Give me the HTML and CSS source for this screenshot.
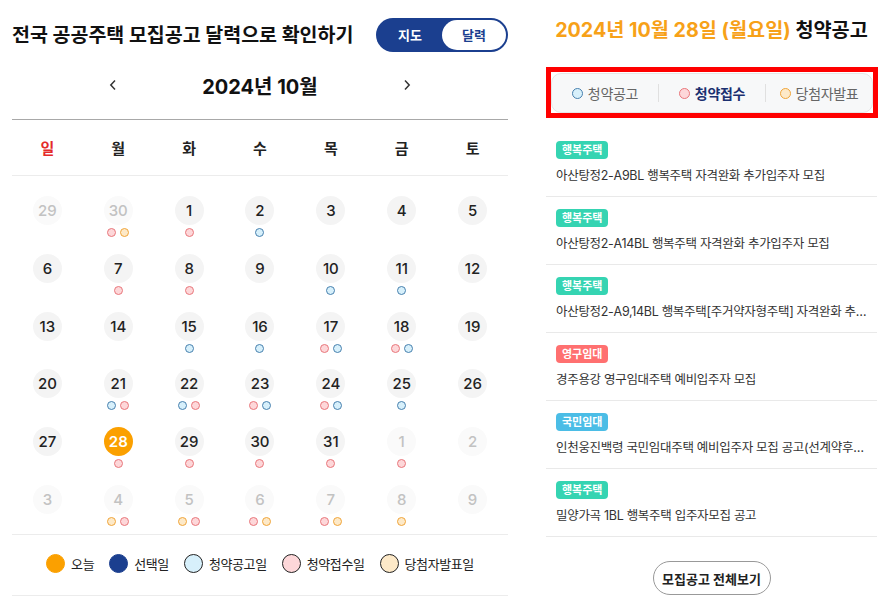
FILE: index.html
```html
<!DOCTYPE html>
<html lang="ko">
<head>
    <meta charset="UTF-8">
    <meta name="viewport" content="width=device-width, initial-scale=1.0">
    <title>공공주택 모집공고 달력</title>
    <link rel="stylesheet" href="styles.css">
</head>
<body>

    <div class="page">
        <!-- 왼쪽: 달력 -->
        <div class="calendar-col">
            <div class="cal-header">
                <h1>전국 공공주택 모집공고 달력으로 확인하기</h1>
                <div class="toggle">
                    <span class="toggle-btn">지도</span>
                    <span class="toggle-btn active">달력</span>
                </div>
            </div>

            <div class="month-nav">
                <svg class="arrow" width="8" height="12" viewBox="0 0 8 12"><path d="M6 1.5 1.8 6 6 10.5" fill="none" stroke="#333" stroke-width="1.5"/></svg>
                <div class="month-title">2024년 10월</div>
                <svg class="arrow" width="8" height="12" viewBox="0 0 8 12"><path d="M2 1.5 6.2 6 2 10.5" fill="none" stroke="#333" stroke-width="1.5"/></svg>
            </div>

            <div class="weekdays">
                <span class="sun">일</span><span>월</span><span>화</span><span>수</span><span>목</span><span>금</span><span>토</span>
            </div>

            <div class="days">
                <div class="day out"><span class="num">29</span><div class="dots"></div></div>
                <div class="day out"><span class="num">30</span><div class="dots"><i class="dot pink"></i><i class="dot yellow"></i></div></div>
                <div class="day"><span class="num">1</span><div class="dots"><i class="dot pink"></i></div></div>
                <div class="day"><span class="num">2</span><div class="dots"><i class="dot blue"></i></div></div>
                <div class="day"><span class="num">3</span><div class="dots"></div></div>
                <div class="day"><span class="num">4</span><div class="dots"></div></div>
                <div class="day"><span class="num">5</span><div class="dots"></div></div>

                <div class="day"><span class="num">6</span><div class="dots"></div></div>
                <div class="day"><span class="num">7</span><div class="dots"><i class="dot pink"></i></div></div>
                <div class="day"><span class="num">8</span><div class="dots"><i class="dot pink"></i></div></div>
                <div class="day"><span class="num">9</span><div class="dots"></div></div>
                <div class="day"><span class="num">10</span><div class="dots"><i class="dot blue"></i></div></div>
                <div class="day"><span class="num">11</span><div class="dots"><i class="dot blue"></i></div></div>
                <div class="day"><span class="num">12</span><div class="dots"></div></div>

                <div class="day"><span class="num">13</span><div class="dots"></div></div>
                <div class="day"><span class="num">14</span><div class="dots"></div></div>
                <div class="day"><span class="num">15</span><div class="dots"><i class="dot blue"></i></div></div>
                <div class="day"><span class="num">16</span><div class="dots"><i class="dot blue"></i></div></div>
                <div class="day"><span class="num">17</span><div class="dots"><i class="dot pink"></i><i class="dot blue"></i></div></div>
                <div class="day"><span class="num">18</span><div class="dots"><i class="dot pink"></i><i class="dot blue"></i></div></div>
                <div class="day"><span class="num">19</span><div class="dots"></div></div>

                <div class="day"><span class="num">20</span><div class="dots"></div></div>
                <div class="day"><span class="num">21</span><div class="dots"><i class="dot blue"></i><i class="dot pink"></i></div></div>
                <div class="day"><span class="num">22</span><div class="dots"><i class="dot blue"></i><i class="dot pink"></i></div></div>
                <div class="day"><span class="num">23</span><div class="dots"><i class="dot pink"></i><i class="dot blue"></i></div></div>
                <div class="day"><span class="num">24</span><div class="dots"><i class="dot pink"></i><i class="dot blue"></i></div></div>
                <div class="day"><span class="num">25</span><div class="dots"><i class="dot blue"></i></div></div>
                <div class="day"><span class="num">26</span><div class="dots"></div></div>

                <div class="day"><span class="num">27</span><div class="dots"></div></div>
                <div class="day today"><span class="num">28</span><div class="dots"><i class="dot pink"></i></div></div>
                <div class="day"><span class="num">29</span><div class="dots"><i class="dot pink"></i></div></div>
                <div class="day"><span class="num">30</span><div class="dots"><i class="dot pink"></i></div></div>
                <div class="day"><span class="num">31</span><div class="dots"><i class="dot pink"></i></div></div>
                <div class="day out"><span class="num">1</span><div class="dots"><i class="dot pink"></i></div></div>
                <div class="day out"><span class="num">2</span><div class="dots"></div></div>

                <div class="day out"><span class="num">3</span><div class="dots"></div></div>
                <div class="day out"><span class="num">4</span><div class="dots"><i class="dot yellow"></i><i class="dot pink"></i></div></div>
                <div class="day out"><span class="num">5</span><div class="dots"><i class="dot yellow"></i><i class="dot pink"></i></div></div>
                <div class="day out"><span class="num">6</span><div class="dots"><i class="dot pink"></i><i class="dot yellow"></i></div></div>
                <div class="day out"><span class="num">7</span><div class="dots"><i class="dot pink"></i><i class="dot yellow"></i></div></div>
                <div class="day out"><span class="num">8</span><div class="dots"><i class="dot yellow"></i></div></div>
                <div class="day out"><span class="num">9</span><div class="dots"></div></div>
            </div>

            <div class="legend">
                <span class="legend-item"><i class="mark today-mark"></i>오늘</span>
                <span class="legend-item"><i class="mark selected-mark"></i>선택일</span>
                <span class="legend-item"><i class="mark blue"></i>청약공고일</span>
                <span class="legend-item"><i class="mark pink"></i>청약접수일</span>
                <span class="legend-item"><i class="mark yellow"></i>당첨자발표일</span>
            </div>
        </div>

        <!-- 오른쪽: 선택일 공고 목록 -->
        <div class="list-col">
            <h2 class="list-title"><span class="hl">2024년 10월 28일 (월요일)</span> 청약공고</h2>

            <div class="tab-frame">
                <div class="tabs">
                    <span class="tab"><i class="dot blue"></i>청약공고</span>
                    <span class="tab active"><i class="dot pink"></i>청약접수</span>
                    <span class="tab"><i class="dot yellow"></i>당첨자발표</span>
                </div>
            </div>

            <ul class="notice-list">
                <li class="notice">
                    <span class="badge happy">행복주택</span>
                    <p class="notice-title">아산탕정2-A9BL 행복주택 자격완화 추가입주자 모집</p>
                </li>
                <li class="notice">
                    <span class="badge happy">행복주택</span>
                    <p class="notice-title">아산탕정2-A14BL 행복주택 자격완화 추가입주자 모집</p>
                </li>
                <li class="notice">
                    <span class="badge happy">행복주택</span>
                    <p class="notice-title">아산탕정2-A9,14BL 행복주택[주거약자형주택] 자격완화 추가입주자 모집</p>
                </li>
                <li class="notice">
                    <span class="badge perm">영구임대</span>
                    <p class="notice-title">경주용강 영구임대주택 예비입주자 모집</p>
                </li>
                <li class="notice">
                    <span class="badge national">국민임대</span>
                    <p class="notice-title">인천웅진백령 국민임대주택 예비입주자 모집 공고(선계약후검증)</p>
                </li>
                <li class="notice">
                    <span class="badge happy">행복주택</span>
                    <p class="notice-title">밀양가곡 1BL 행복주택 입주자모집 공고</p>
                </li>
            </ul>

            <div class="more-wrap">
                <button class="more-btn">모집공고 전체보기</button>
            </div>
        </div>
    </div>

</body>
</html>
```

FILE: styles.css
```css
* {
    box-sizing: border-box;
    margin: 0;
    padding: 0;
    font-family: Inter, "Noto Sans CJK KR", sans-serif;
}

body {
    background: #fff;
    color: #222;
}

.page {
    display: flex;
    gap: 38px;
    padding: 0 10px 0 12px;
}

/* ---------- 달력 ---------- */

.calendar-col {
    width: 496px;
    flex-shrink: 0;
}

.cal-header {
    display: flex;
    justify-content: space-between;
    align-items: center;
    padding-top: 18px;
}

h1 {
    font-size: 19.5px;
    font-weight: 700;
    line-height: 34px;
    color: #111;
}

.toggle {
    display: flex;
    width: 132px;
    height: 34px;
    padding: 2px;
    border-radius: 17px;
    background: #1b3f8f;
}

.toggle-btn {
    flex: 1;
    border-radius: 15px;
    text-align: center;
    font-size: 13px;
    font-weight: 700;
    line-height: 30px;
    color: #fff;
}

.toggle-btn.active {
    background: #fff;
    color: #1b3f8f;
}

.month-nav {
    display: flex;
    justify-content: center;
    align-items: center;
    gap: 85px;
    height: 30px;
    margin-top: 18px;
    margin-bottom: 19px;
}

.month-title {
    font-size: 20px;
    font-weight: 700;
    color: #111;
}

.weekdays {
    display: grid;
    grid-template-columns: repeat(7, 1fr);
    height: 57px;
    align-items: center;
    border-top: 1px solid #a8a8a8;
    border-bottom: 1px solid #ececec;
    text-align: center;
    font-size: 15px;
    font-weight: 700;
    color: #222;
}

.weekdays .sun {
    color: #e42a2a;
}

.days {
    display: grid;
    grid-template-columns: repeat(7, 1fr);
    grid-auto-rows: 41px;
    row-gap: 16.8px;
    padding: 20px 0 8px;
    border-bottom: 1px solid #ececec;
}

.day {
    display: flex;
    flex-direction: column;
    align-items: center;
}

.num {
    width: 29px;
    height: 29px;
    border-radius: 50%;
    background: #f4f4f4;
    text-align: center;
    font-size: 15px;
    font-weight: 500;
    line-height: 29px;
    color: #222;
}

.day.out .num {
    background: #fafafa;
    color: #c2c2c2;
}

.day.today .num {
    background: #fba000;
    color: #fff;
    font-weight: 600;
}

.dots {
    display: flex;
    gap: 4px;
    height: 9px;
    margin-top: 3px;
}

.dot {
    display: inline-block;
    width: 9px;
    height: 9px;
    border-radius: 50%;
    border: 1px solid;
}

.blue {
    background: #d7f0fb;
    border-color: #4780ae;
}

.pink {
    background: #fdd7d9;
    border-color: #e9777c;
}

.yellow {
    background: #fde9c8;
    border-color: #f0a53a;
}

.legend {
    display: flex;
    justify-content: center;
    align-items: center;
    gap: 15px;
    height: 61px;
    padding-bottom: 3px;
    border-bottom: 1px solid #ececec;
    font-size: 13px;
    letter-spacing: -0.4px;
    color: #222;
}

.legend-item {
    display: flex;
    align-items: center;
    gap: 6px;
}

.mark {
    display: inline-block;
    width: 19px;
    height: 19px;
    border-radius: 50%;
    border: 1px solid;
}

.today-mark {
    background: #fba000;
    border-color: #fba000;
}

.selected-mark {
    background: #1b3f8f;
    border-color: #1b3f8f;
}

/* ---------- 공고 목록 ---------- */

.list-col {
    width: 331px;
    flex-shrink: 0;
}

.list-title {
    padding-top: 16px;
    text-align: center;
    font-size: 19.7px;
    font-weight: 700;
    line-height: 28px;
    color: #111;
}

.list-title .hl {
    color: #f7a118;
}

.tab-frame {
    margin-top: 23px;
    margin-right: -1px;
    border: 5px solid #ff0000;
    padding: 1px 0 0;
}

.tabs {
    display: flex;
    align-items: center;
    height: 40px;
    background: #f7f8f9;
    border: 1px solid #e6e6e6;
    border-radius: 10px;
}

.tab {
    flex: 1;
    display: flex;
    justify-content: center;
    align-items: center;
    gap: 5px;
    font-size: 14px;
    letter-spacing: -0.3px;
    color: #666;
}

.tab .dot {
    width: 11px;
    height: 11px;
}

.tab + .tab {
    border-left: 1px solid #e0e0e0;
    height: 18px;
}

.tab.active {
    font-weight: 700;
    color: #1b3070;
}

.notice-list {
    list-style: none;
    margin-top: 11px;
}

.notice {
    display: flex;
    flex-direction: column;
    align-items: flex-start;
    padding: 12px 10px 11px;
    border-bottom: 1px solid #e9e9e9;
}

.badge {
    display: block;
    height: 18px;
    padding: 0 6px;
    border-radius: 4px;
    font-size: 11px;
    font-weight: 700;
    line-height: 18px;
    color: #fff;
}

.badge.happy {
    background: #35d4b2;
}

.badge.perm {
    background: #ff7070;
}

.badge.national {
    background: #4bbde6;
}

.notice-title {
    width: 100%;
    margin-top: 8px;
    font-size: 12.5px;
    letter-spacing: -0.3px;
    line-height: 18px;
    color: #333;
    white-space: nowrap;
    overflow: hidden;
    text-overflow: ellipsis;
}

.more-wrap {
    display: flex;
    justify-content: center;
    margin-top: 24px;
}

.more-btn {
    width: 118px;
    height: 34px;
    border: 1px solid #999;
    border-radius: 17px;
    background: #fff;
    font-size: 13px;
    font-weight: 700;
    color: #222;
}
```
